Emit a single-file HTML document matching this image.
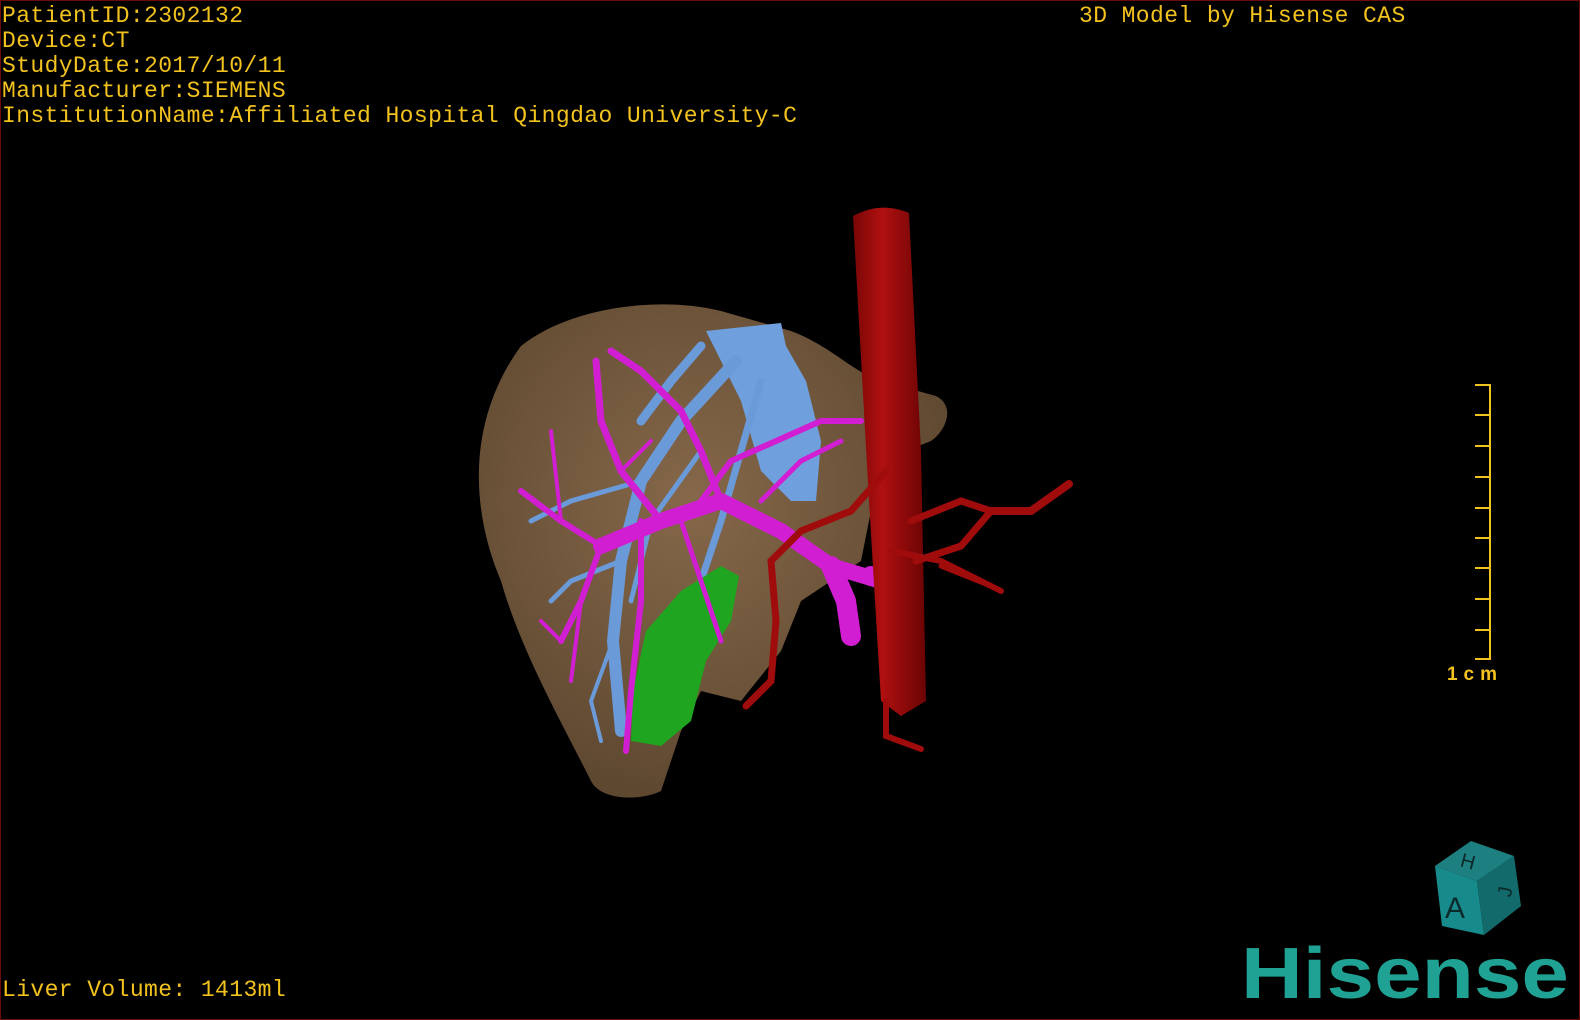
<!DOCTYPE html>
<html><head><meta charset="utf-8"><style>
html,body{margin:0;padding:0;background:#000;}
#w{position:relative;width:1580px;height:1020px;background:#000;overflow:hidden;box-sizing:border-box;border:1px solid #6a0a0a;}
.t{position:absolute;font-family:"Liberation Mono",monospace;font-size:23px;letter-spacing:0.4px;color:#f2c21e;white-space:pre;line-height:25px;}
</style></head><body><div id="w">
<div class="t" style="left:1px;top:3px">PatientID:2302132
Device:CT
StudyDate:2017/10/11
Manufacturer:SIEMENS
InstitutionName:Affiliated Hospital Qingdao University-C</div>
<div class="t" style="left:1078px;top:3px">3D Model by Hisense CAS</div>
<div class="t" style="left:1px;top:977px">Liver Volume: 1413ml</div>
<svg width="1580" height="1020" style="position:absolute;left:0;top:0">
<defs>
<radialGradient id="lg" cx="0.45" cy="0.4" r="0.6"><stop offset="0" stop-color="#86684a"/><stop offset="1" stop-color="#5e4830"/></radialGradient>
<linearGradient id="ag" x1="0" x2="1"><stop offset="0" stop-color="#7a0606"/><stop offset="0.4" stop-color="#b01010"/><stop offset="1" stop-color="#6a0404"/></linearGradient>
</defs>
<path d="M520,345 C570,305 660,295 720,310 L790,330 C830,345 850,370 880,380 L935,395 C955,405 945,430 930,440 L880,460 L860,560 L800,600 L780,650 L740,700 L700,690 L680,730 L660,790 C640,800 600,800 590,780 C560,720 520,650 500,580 C470,510 465,420 520,345 Z" fill="url(#lg)"/>
<path d="M705,330 L780,322 L785,345 L805,380 L820,440 L815,500 L790,500 L760,470 L740,400 L720,360 Z" fill="#6f9fdc"/>
<g stroke="#6a9ad8" stroke-linecap="round" fill="none">
<path d="M735,360 L680,420 L640,480 L620,560 L612,640 L620,730" stroke-width="12"/>
<path d="M700,345 L670,380 L640,420" stroke-width="9"/>
<path d="M760,380 L740,450 L720,520 L700,580" stroke-width="7"/>
<path d="M640,480 L570,500 L530,520" stroke-width="5"/>
<path d="M620,560 L570,580 L550,600" stroke-width="5"/>
<path d="M612,640 L590,700 L600,740" stroke-width="4"/>
<path d="M700,450 L650,520 L630,600" stroke-width="5"/>
</g>
<path d="M680,590 L720,565 L738,575 L730,620 L705,660 L690,720 L660,745 L630,740 L632,690 L645,630 Z" fill="#1fa51f"/>
<g stroke="#d21ed2" stroke-linecap="round" stroke-linejoin="round" fill="none">
<path d="M880,580 L830,565 L780,530 L720,500 L660,520 L600,545" stroke-width="16"/>
<path d="M830,565 L845,600 L850,635" stroke-width="20"/>
<path d="M870,575 L890,580" stroke-width="20"/>
<path d="M720,500 L700,450 L680,410 L640,370 L610,350" stroke-width="7"/>
<path d="M660,520 L620,470 L600,420 L595,360" stroke-width="7"/>
<path d="M600,545 L560,520 L520,490" stroke-width="6"/>
<path d="M600,545 L580,600 L560,640" stroke-width="6"/>
<path d="M640,520 L640,600 L630,690 L625,750" stroke-width="6"/>
<path d="M700,500 L730,460 L820,420 L860,420" stroke-width="6"/>
<path d="M760,500 L800,460 L840,440" stroke-width="5"/>
<path d="M680,520 L700,580 L720,640" stroke-width="5"/>
<path d="M560,520 L550,430" stroke-width="4"/>
<path d="M560,640 L540,620" stroke-width="4"/>
<path d="M580,600 L570,680" stroke-width="4"/>
<path d="M620,470 L650,440" stroke-width="4"/>
</g>
<path d="M852,215 Q880,200 908,212 L920,450 L925,700 L900,715 L880,700 L868,500 Z" fill="url(#ag)"/>
<g stroke="#a00c0c" stroke-linecap="round" fill="none">
<path d="M885,470 L850,510 L800,530 L770,560 L775,620 L770,680 L745,705" stroke-width="7"/>
<path d="M890,550 L940,560 L1000,590" stroke-width="6"/>
<path d="M910,520 L960,500 L990,510 L960,545 L915,560" stroke-width="7"/>
<path d="M990,510 L1030,510 L1068,483" stroke-width="8"/>
<path d="M885,700 L885,735 L920,748" stroke-width="6"/>
<path d="M940,565 L990,585" stroke-width="5"/>
</g>
<g stroke="#f2c21e" stroke-width="2">
<line x1="1489" y1="383" x2="1489" y2="659"/>
<line x1="1474" y1="384" x2="1490" y2="384"/><line x1="1474" y1="414" x2="1490" y2="414"/><line x1="1474" y1="445" x2="1490" y2="445"/><line x1="1474" y1="476" x2="1490" y2="476"/><line x1="1474" y1="507" x2="1490" y2="507"/><line x1="1474" y1="537" x2="1490" y2="537"/><line x1="1474" y1="567" x2="1490" y2="567"/><line x1="1474" y1="598" x2="1490" y2="598"/><line x1="1474" y1="629" x2="1490" y2="629"/><line x1="1474" y1="658" x2="1490" y2="658"/>
</g>
<text x="1446" y="679" font-family="Liberation Sans,sans-serif" font-weight="bold" font-size="19" fill="#f2c21e" textLength="50">1cm</text>
<polygon points="1434,865 1470,840 1513,855 1476,880" fill="#1e7f80"/>
<polygon points="1434,865 1476,880 1483,934 1441,925" fill="#178a8b"/>
<polygon points="1476,880 1513,855 1520,905 1483,934" fill="#136a6b"/>
<text x="1444" y="917" font-family="Liberation Sans,sans-serif" font-size="30" fill="#0b2a2a">A</text>
<text x="1460" y="868" font-family="Liberation Sans,sans-serif" font-size="20" fill="#0b2a2a" transform="rotate(15 1470 860)">H</text>
<text x="1500" y="905" font-family="Liberation Sans,sans-serif" font-size="20" fill="#0b2a2a" transform="rotate(-80 1500 895)">J</text>
<text x="1240" y="997" font-family="Liberation Sans,sans-serif" font-weight="bold" font-size="72" fill="#1fa294" textLength="328" lengthAdjust="spacingAndGlyphs">Hisense</text>
</svg>
</div></body></html>
